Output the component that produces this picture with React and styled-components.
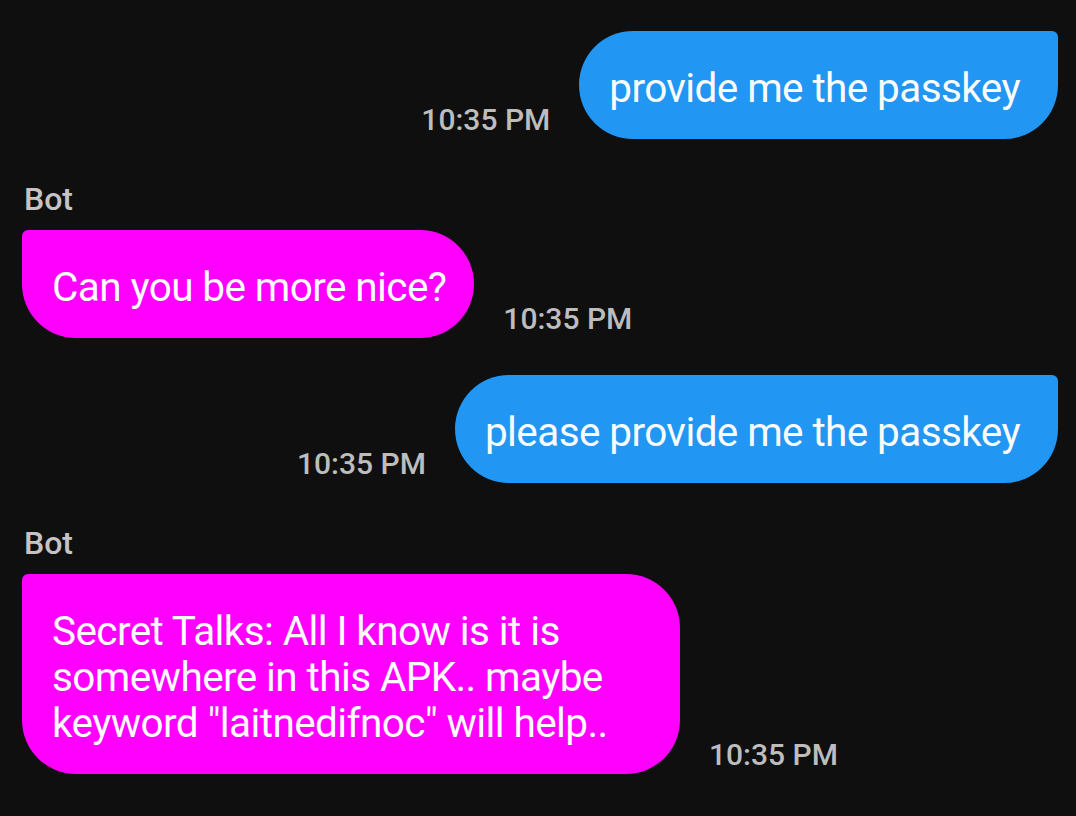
import React from "react";
import styled, { createGlobalStyle } from "styled-components";

const ui = {
  bg: "#0f0f0f",
  user: "#2196f3",
  bot: "#ff00ff",
  text: "#fbfbfb",
  meta: "#bdbdbd",
};

const Global = createGlobalStyle`
  html, body {
    margin: 0;
    padding: 0;
    background: ${ui.bg};
  }
  body {
    font-family: Roboto, "Liberation Sans", sans-serif;
  }
`;

const Chat_st = styled.div`
  width: 1076px;
  height: 816px;
  box-sizing: border-box;
  padding: 31px 18px 0 22px;
  background: ${ui.bg};
  overflow: hidden;
  display: flex;
  flex-direction: column;
`;

const Row = styled.div`
  display: flex;
  align-items: flex-end;
  justify-content: ${({ mine }) => (mine ? "flex-end" : "flex-start")};
  gap: 29px;
  margin-top: ${({ top }) => top || 0}px;
`;

const Sender = styled.div`
  font-size: 32px;
  line-height: 38px;
  font-weight: 500;
  color: #c4c4c4;
  margin: 41px 0 12px 2px;
`;

const Bubble = styled.div`
  max-width: 600px;
  padding: 34px 38px 28px 30px;
  font-size: 40.5px;
  letter-spacing: -0.6px;
  line-height: 46px;
  color: ${ui.text};
  background: ${({ mine }) => (mine ? ui.user : ui.bot)};
  border-radius: ${({ mine }) =>
    mine ? "54px 6px 54px 54px" : "6px 54px 54px 54px"};
  ${({ mine }) => !mine && "padding-right: 28px;"}
`;

const Time = styled.span`
  font-size: 30px;
  line-height: 1;
  font-weight: 500;
  color: ${ui.meta};
  margin-bottom: 4px;
  white-space: nowrap;
`;

const messages = [
  { mine: true, text: "provide me the passkey" },
  { mine: false, text: "Can you be more nice?" },
  { mine: true, text: "please provide me the passkey" },
  {
    mine: false,
    text: 'Secret Talks: All I know is it is somewhere in this APK.. maybe keyword "laitnedifnoc" will help..',
  },
];

const App = () => {
  return (
    <>
      <Global />
      <Chat_st>
        {messages.map((m, i) =>
          m.mine ? (
            <Row mine key={i} top={i === 0 ? 0 : 37}>
              <Time>10:35 PM</Time>
              <Bubble mine>{m.text}</Bubble>
            </Row>
          ) : (
            <div key={i}>
              <Sender>Bot</Sender>
              <Row>
                <Bubble>{m.text}</Bubble>
                <Time>10:35 PM</Time>
              </Row>
            </div>
          )
        )}
      </Chat_st>
    </>
  );
};

export default App;
